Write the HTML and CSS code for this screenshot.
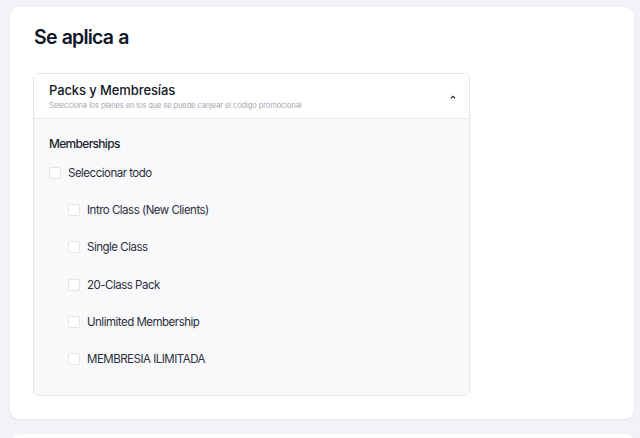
FILE: index.html
```html
<!DOCTYPE html>
<html lang="es">
<head>
<meta charset="utf-8">
<title>Se aplica a</title>
<link rel="stylesheet" href="styles.css">
</head>
<body>
<main class="page">
  <section class="card">
    <h2 class="card-title">Se aplica a</h2>
    <div class="accordion">
      <div class="acc-head">
        <div class="acc-text">
          <div class="acc-title">Packs y Membresías</div>
          <div class="acc-sub">Selecciona los planes en los que se puede canjear el código promocional</div>
        </div>
        <svg class="chev" width="6" height="4" viewBox="0 0 6 4"><path d="M1 3.3 L3 1.3 L5 3.3" fill="none" stroke="#333" stroke-width="1.3"/></svg>
      </div>
      <div class="acc-body">
        <div class="group-label">Memberships</div>
        <label class="check all"><span class="box"></span>Seleccionar todo</label>
        <div class="children">
          <label class="check"><span class="box"></span>Intro Class (New Clients)</label>
          <label class="check"><span class="box"></span>Single Class</label>
          <label class="check"><span class="box"></span>20-Class Pack</label>
          <label class="check"><span class="box"></span>Unlimited Membership</label>
          <label class="check"><span class="box"></span>MEMBRESIA ILIMITADA</label>
        </div>
      </div>
    </div>
  </section>
  <section class="card next"></section>
</main>
</body>
</html>
```
FILE: styles.css
```css
* { box-sizing: border-box; }
html, body { margin: 0; }
body {
  background: #f2f3f7;
  font-family: Inter, "Noto Sans", sans-serif;
  color: #1a1f2e;
  overflow: hidden;
  height: 438px;
}
.page {
  padding: 7px 6px 0 10px;
  display: flex;
  flex-direction: column;
  gap: 15px;
}
.card {
  background: #fff;
  border-radius: 9px;
  box-shadow: 0 1px 3px rgba(20, 30, 60, 0.06);
  padding: 17px 23px 23px 23px;
  height: 412px;
  flex: none;
}
.card.next { height: 20px; padding: 0; }
.card-title {
  margin: 0 0 23px 1px;
  font-size: 19.5px;
  font-weight: 600;
  color: #0f1729;
  letter-spacing: -0.8px;
  word-spacing: 1px;
  line-height: 26px;
}
.accordion {
  width: 437px;
  border: 1px solid #e6e7eb;
  border-radius: 5px;
  overflow: hidden;
}
.acc-head {
  background: #fff;
  height: 45px;
  border-bottom: 1px solid #e9eaee;
  display: flex;
  align-items: center;
  justify-content: space-between;
  padding: 2px 13px 0 15px;
}
.acc-title {
  font-size: 13px;
  font-weight: 500;
  color: #111827;
  line-height: 15px;
  letter-spacing: -0.1px;
}
.acc-sub {
  font-size: 7.5px;
  color: #a3a6ae;
  line-height: 11px;
  margin-top: 2px;
  letter-spacing: -0.1px;
}
.chev { margin-top: 0; }
.acc-body {
  background: #f9f9fb;
  padding: 17px 15px 24px 15px;
  height: 276px;
}
.group-label {
  font-size: 12px;
  font-weight: 500;
  color: #1a1f2e;
  line-height: 16px;
  margin-bottom: 13px;
  letter-spacing: -0.7px;
}
.check {
  display: flex;
  align-items: center;
  gap: 7px;
  font-size: 11.5px;
  color: #2a2f3b;
  height: 16px;
  letter-spacing: -0.5px;
}
.box {
  width: 12px;
  height: 12px;
  background: #fff;
  border: 1px solid #e4e5ea;
  border-radius: 2px;
  flex: none;
}
.children {
  padding-left: 19px;
  margin-top: 21px;
  display: flex;
  flex-direction: column;
  gap: 21.3px;
}
```
